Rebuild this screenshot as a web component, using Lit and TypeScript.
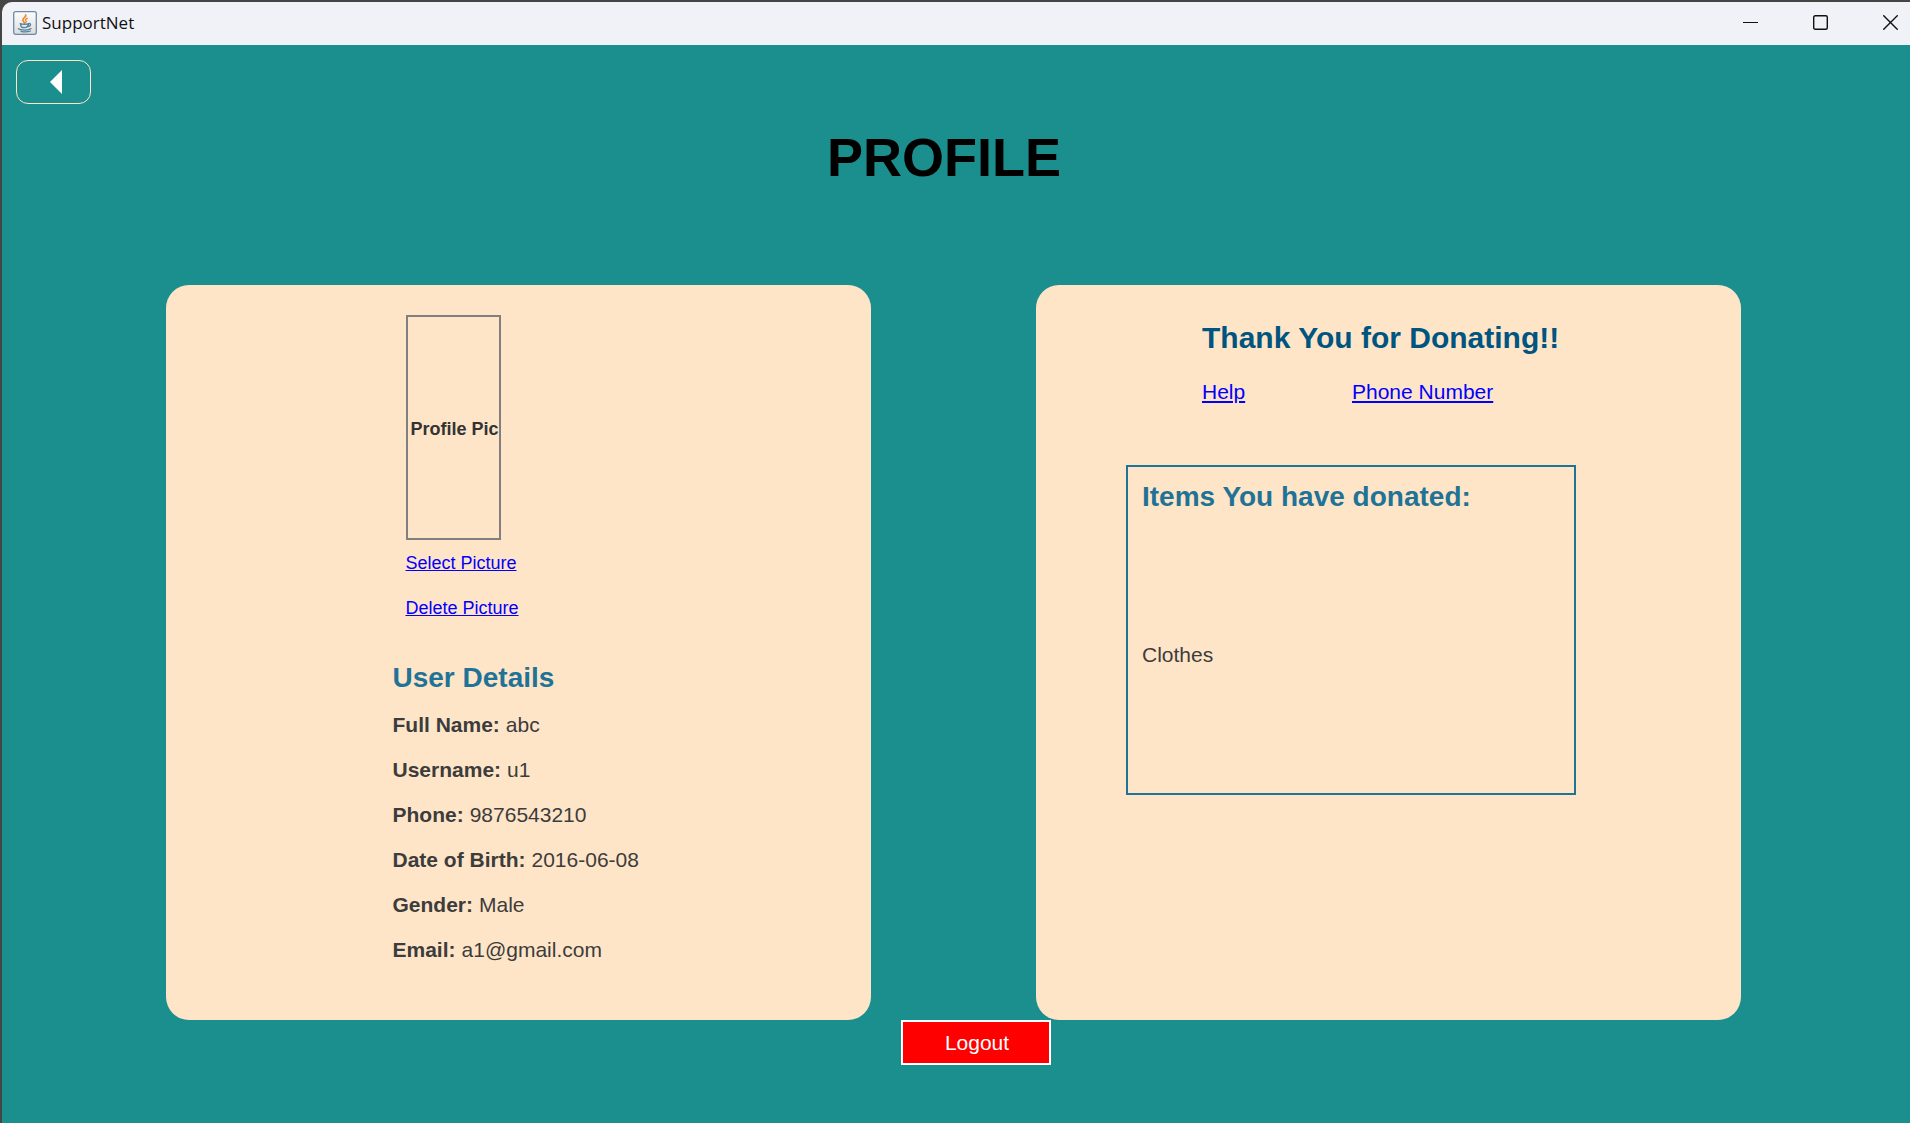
import { LitElement, html, css } from "lit";
import { customElement, property } from "lit/decorators.js";

interface Detail {
  label: string;
  value: string;
}

@customElement("title-bar")
class TitleBar extends LitElement {
  @property() caption = "";

  static styles = css`
    :host {
      display: block;
    }
    .bar {
      display: flex;
      align-items: center;
      height: 43px;
      box-sizing: border-box;
      padding: 0 12px 2px 11px;
      background: #f1f2f8;
      border-top-left-radius: 10px;
    }
    .logo {
      display: block;
      width: 24px;
      height: 24px;
    }
    .caption {
      flex: 1;
      margin-left: 5px;
      font-family: "Open Sans", "Noto Sans", sans-serif;
      font-size: 17px;
      line-height: 24px;
      color: #111;
    }
    .controls {
      display: flex;
      gap: 55px;
    }
    .control {
      display: block;
      width: 15px;
      height: 15px;
      padding: 0;
      border: 0;
      background: none;
    }
    .glyph {
      display: block;
      width: 15px;
      height: 15px;
    }
  `;

  render() {
    return html`
      <header class="bar">
        <svg class="logo" viewBox="0 0 24 24" aria-hidden="true">
          <defs>
            <linearGradient id="tile" x1="0" y1="0" x2="0" y2="1">
              <stop offset="0" stop-color="#fdfdfd" />
              <stop offset="1" stop-color="#dcdcdc" />
            </linearGradient>
          </defs>
          <rect x="0.7" y="0.7" width="22.6" height="22.6" rx="2" fill="url(#tile)" stroke="#6d8ba3" stroke-width="1.3" />
          <path d="M12.6 4c1.4 2-3.4 3.2-2.7 5.2.2.9 1.2 1.7 1.5 2.700" fill="none" stroke="#ee8a2c" stroke-width="1.7" stroke-linecap="round" />
          <path d="M14.3 7.300c-1.9.9-2.4 1.600-1.300 2.700.5.6.2 1.200-.4 1.700" fill="none" stroke="#ee8a2c" stroke-width="1.3" stroke-linecap="round" />
          <path d="M7.200 12.700c1.800.8 6.700.8 8.500 0M7.500 12.900c.3 3.600 1.600 3.700 4 3.700s3.600-.5 4-3.700M15.700 12.600c2.400-.6 2.600 2.500-.5 2.900" fill="none" stroke="#5482a1" stroke-width="1.4" stroke-linecap="round" />
          <path d="M5.300 17.800c2.500 1.700 10.500 1.700 12.800-.2M8 20.300c2.500.6 7 .5 9.500-.3" fill="none" stroke="#5482a1" stroke-width="1.3" stroke-linecap="round" />
        </svg>
        <span class="caption">${this.caption}</span>
        <div class="controls">
          <button class="control" type="button" aria-label="Minimize">
            <svg class="glyph" viewBox="0 0 15 15">
              <path d="M0 7.500H15" stroke="#111" stroke-width="1" />
            </svg>
          </button>
          <button class="control" type="button" aria-label="Maximize">
            <svg class="glyph" viewBox="0 0 15 15">
              <rect x="0.700" y="0.700" width="13.600" height="13.600" rx="1.500" fill="none" stroke="#111" stroke-width="1.400" />
            </svg>
          </button>
          <button class="control" type="button" aria-label="Close">
            <svg class="glyph" viewBox="0 0 15 15">
              <path d="M0.300 0.300L14.700 14.700M14.700 0.300L0.300 14.700" stroke="#111" stroke-width="1.400" />
            </svg>
          </button>
        </div>
      </header>
    `;
  }
}

@customElement("user-card")
class UserCard extends LitElement {
  @property({ attribute: false }) details: Detail[] = [];

  static styles = css`
    :host {
      display: block;
      box-sizing: border-box;
      padding: 30px 0;
      border-radius: 23px;
      background: #ffe5c8;
    }
    .column {
      width: 252px;
      margin: 0 auto;
    }
    .picture {
      padding-left: 13px;
    }
    .frame {
      display: flex;
      align-items: center;
      box-sizing: border-box;
      width: 95px;
      height: 225px;
      margin-bottom: 1px;
      padding: 4px 0 0 3px;
      overflow: hidden;
      border: 2px solid #808080;
      font-size: 18px;
      font-weight: bold;
      white-space: nowrap;
      color: #333;
    }
    .row {
      display: block;
      font-size: 18px;
      line-height: 45px;
    }
    .link {
      color: #00f;
      text-decoration: underline;
    }
    .heading {
      margin: 29px 0 6px;
      font-size: 28px;
      line-height: 36px;
      color: #1f7396;
    }
    .details {
      margin: 0;
      font-size: 21px;
      line-height: 45px;
      color: #3c3c3c;
    }
    .detail {
      display: flex;
      gap: 6px;
      white-space: nowrap;
    }
    .label {
      font-weight: bold;
    }
    .value {
      margin: 0;
    }
  `;

  render() {
    return html`
      <div class="column">
        <div class="picture">
          <div class="frame">Profile Pic</div>
          <div class="row"><a class="link" href="#select">Select Picture</a></div>
          <div class="row"><a class="link" href="#delete">Delete Picture</a></div>
        </div>
        <h2 class="heading">User Details</h2>
        <dl class="details">
          ${this.details.map(
            (d) => html`
              <div class="detail">
                <dt class="label">${d.label}:</dt>
                <dd class="value">${d.value}</dd>
              </div>
            `
          )}
        </dl>
      </div>
    `;
  }
}

@customElement("donation-card")
class DonationCard extends LitElement {
  @property({ attribute: false }) items: string[] = [];

  static styles = css`
    :host {
      display: block;
      box-sizing: border-box;
      padding: 30px 90px;
      border-radius: 23px;
      background: #ffe5c8;
    }
    .intro {
      display: flex;
      flex-direction: column;
      gap: 9px;
      padding-left: 76px;
    }
    .thanks {
      margin: 0;
      font-size: 30px;
      line-height: 45px;
      white-space: nowrap;
      color: #005580;
    }
    .links {
      display: grid;
      grid-template-columns: 150px auto;
      justify-content: start;
      font-size: 21px;
      line-height: 45px;
    }
    .link {
      color: #00f;
      text-decoration: underline;
    }
    .donated {
      display: flex;
      flex-direction: column;
      box-sizing: border-box;
      max-width: 450px;
      min-height: 330px;
      margin-top: 51px;
      padding: 12px 14px 0;
      border: 2px solid #1f7396;
    }
    .heading {
      margin: 0;
      font-size: 28px;
      line-height: 36px;
      color: #1f7396;
    }
    .items {
      flex: 1;
      display: flex;
      flex-direction: column;
      justify-content: center;
      margin: 0;
      padding: 0;
      list-style: none;
      font-size: 21px;
      line-height: 45px;
      color: #3c3c3c;
    }
  `;

  render() {
    return html`
      <div class="intro">
        <h2 class="thanks">Thank You for Donating!!</h2>
        <nav class="links">
          <span><a class="link" href="#help">Help</a></span>
          <span><a class="link" href="#phone">Phone Number</a></span>
        </nav>
      </div>
      <section class="donated">
        <h3 class="heading">Items You have donated:</h3>
        <ul class="items">
          ${this.items.map((item) => html`<li>${item}</li>`)}
        </ul>
      </section>
    `;
  }
}

@customElement("app-root")
class AppRoot extends LitElement {
  private details: Detail[] = [
    { label: "Full Name", value: "abc" },
    { label: "Username", value: "u1" },
    { label: "Phone", value: "9876543210" },
    { label: "Date of Birth", value: "2016-06-08" },
    { label: "Gender", value: "Male" },
    { label: "Email", value: "a1@gmail.com" },
  ];

  private items = ["Clothes"];

  static styles = css`
    :host {
      display: flex;
      flex-direction: column;
      box-sizing: border-box;
      min-height: 100vh;
      padding: 2px 0 0 2px;
      background: #454545;
      font-family: "Liberation Sans", Arial, sans-serif;
    }
    .page {
      flex: 1;
      padding-top: 15px;
      background: #1b8e8e;
    }
    .back {
      display: flex;
      align-items: center;
      justify-content: center;
      box-sizing: border-box;
      width: 75px;
      height: 44px;
      margin-left: 14px;
      padding: 0 0 0 4px;
      border: 1px solid #ffe5c8;
      border-radius: 12px;
      background: none;
    }
    .arrow {
      display: block;
      width: 12px;
      height: 24px;
    }
    .title {
      margin: 23px 0 98px;
      padding-right: 24px;
      font-size: 54px;
      line-height: 60px;
      text-align: center;
      color: #000;
    }
    .cards {
      display: grid;
      grid-template-columns: 1fr 1fr;
      gap: 165px;
      min-height: 735px;
      padding: 0 169px 0 164px;
    }
    .actions {
      display: flex;
      justify-content: center;
      padding: 0 0 20px 40px;
    }
    .logout {
      box-sizing: border-box;
      width: 150px;
      height: 45px;
      padding: 0 0 0 2px;
      border: 2px solid #fff;
      background: #f00;
      font-family: inherit;
      font-size: 21px;
      color: #fff;
    }
  `;

  render() {
    return html`
      <title-bar caption="SupportNet"></title-bar>
      <main class="page">
        <button class="back" type="button" aria-label="Back">
          <svg class="arrow" viewBox="0 0 12 24">
            <path d="M12 0V24L0 12Z" fill="#fff" />
          </svg>
        </button>
        <h1 class="title">PROFILE</h1>
        <div class="cards">
          <user-card .details=${this.details}></user-card>
          <donation-card .items=${this.items}></donation-card>
        </div>
        <div class="actions">
          <button class="logout" type="button">Logout</button>
        </div>
      </main>
    `;
  }
}
